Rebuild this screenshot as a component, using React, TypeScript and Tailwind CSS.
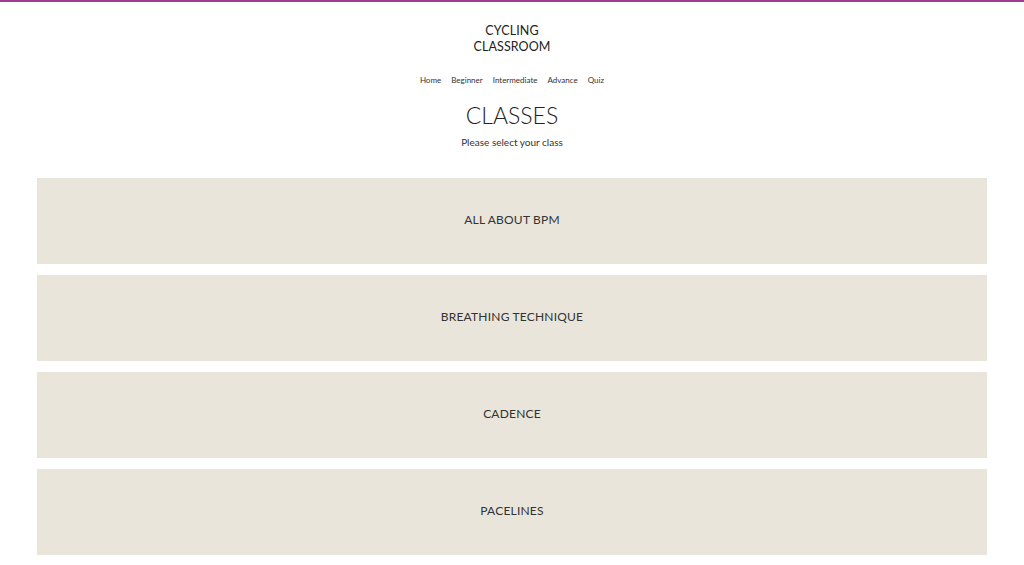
import React from "react";

const classes = ["ALL ABOUT BPM", "BREATHING TECHNIQUE", "CADENCE", "PACELINES"];

export default function App() {
  return (
    <div className="w-[1024px] h-[565px] overflow-hidden bg-white" style={{ fontFamily: "Lato, 'Open Sans', sans-serif" }}>
      <div className="h-[2px] bg-[#a23a92]" />
      <div className="flex flex-col items-center">
        <div className="mt-[21px] text-center text-[12.5px] leading-[16px] tracking-[0.1px] text-[#222]">
          <div>CYCLING</div>
          <div>CLASSROOM</div>
        </div>
        <nav className="mt-[19px] flex gap-[10px] text-[8px] leading-[12px] text-[#333]">
          <span>Home</span>
          <span>Beginner</span>
          <span>Intermediate</span>
          <span>Advance</span>
          <span>Quiz</span>
        </nav>
        <h1 className="mt-[15px] text-[23px] leading-[28px] font-light text-[#222]">CLASSES</h1>
        <p className="mt-[6px] text-[10px] leading-[14px] text-[#333]">Please select your class</p>
      </div>
      <div className="mt-[29px] mx-[37px] flex flex-col gap-[11px]">
        {classes.map((c) => (
          <div key={c} className="h-[86px] bg-[#e9e5da] flex items-center justify-center pb-[2px] text-[12px] tracking-[0.2px] text-[#333]">
            {c}
          </div>
        ))}
      </div>
    </div>
  );
}
